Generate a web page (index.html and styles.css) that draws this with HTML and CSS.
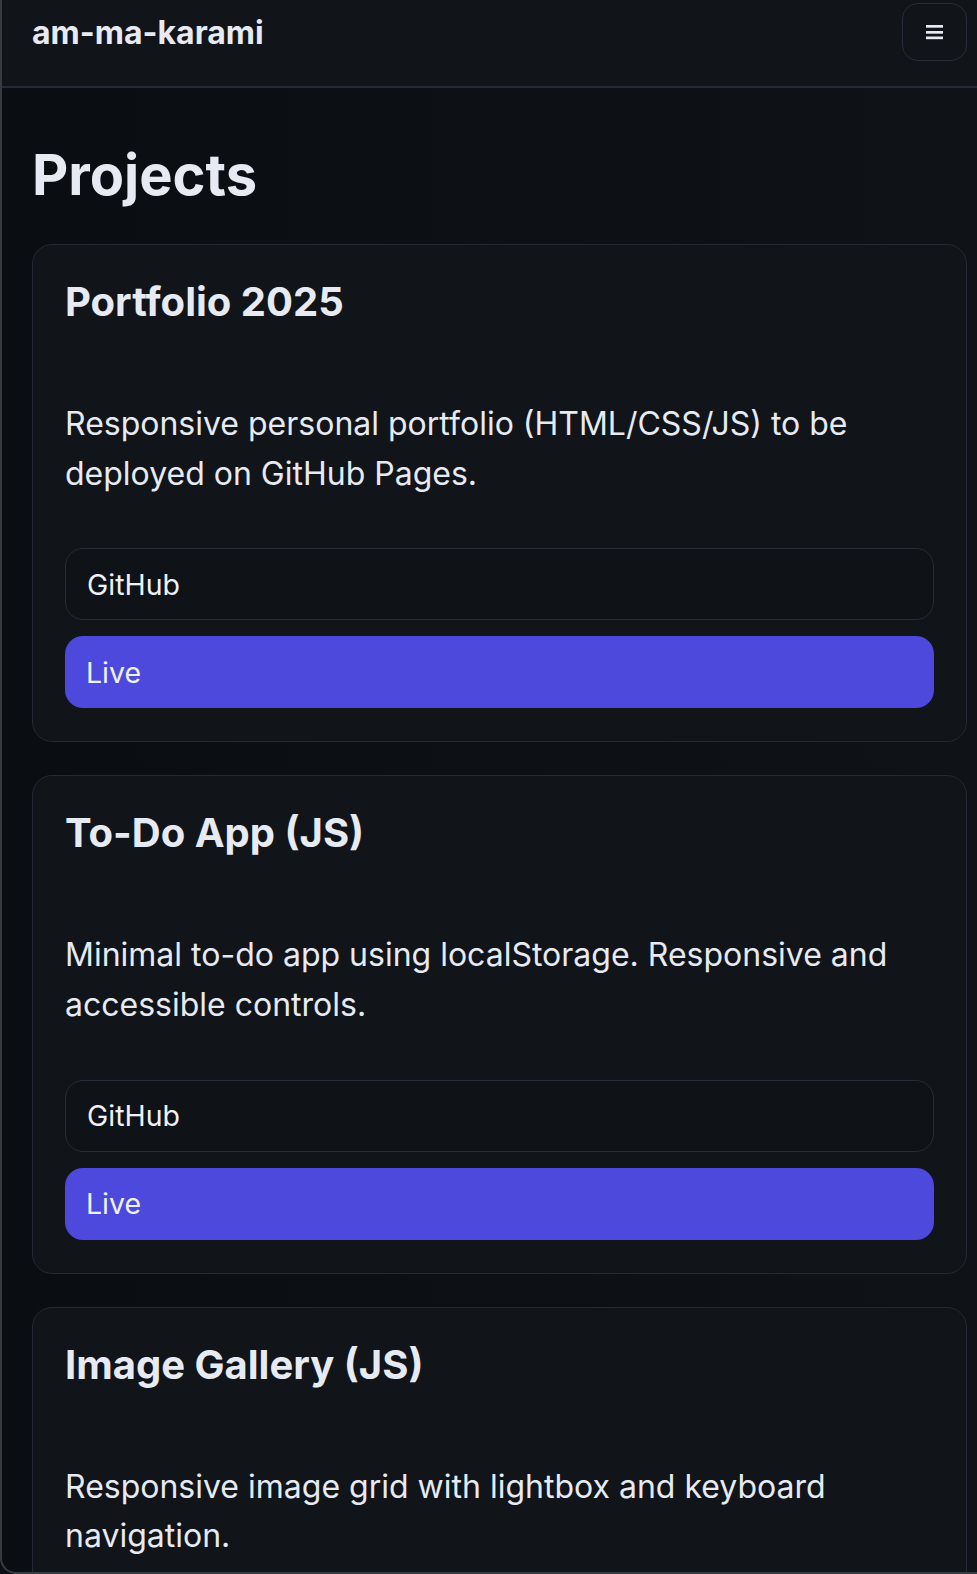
FILE: index.html
```html
<!DOCTYPE html>
<html lang="en">
<head>
<meta charset="utf-8">
<title>am-ma-karami — Projects</title>
<link rel="stylesheet" href="styles.css">
</head>
<body>
<div class="frame">
  <header class="site-header">
    <a class="brand" href="#">am-ma-karami</a>
    <button class="menu-btn" aria-label="Menu">
      <svg width="17" height="15" viewBox="0 0 17 15" aria-hidden="true">
        <rect x="0" y="0" width="17" height="2.7" fill="#e6eaf2"/>
        <rect x="0" y="6" width="17" height="2.7" fill="#e6eaf2"/>
        <rect x="0" y="11.5" width="17" height="2.7" fill="#e6eaf2"/>
      </svg>
    </button>
  </header>
  <main class="content">
    <h1 class="page-title">Projects</h1>
    <div class="cards">
      <article class="card">
        <h2 class="card-title">Portfolio 2025</h2>
        <p class="card-desc">Responsive personal portfolio (HTML/CSS/JS) to be deployed on GitHub Pages.</p>
        <div class="card-actions">
          <a class="btn btn-outline" href="#">GitHub</a>
          <a class="btn btn-primary" href="#">Live</a>
        </div>
      </article>
      <article class="card">
        <h2 class="card-title">To-Do App (JS)</h2>
        <p class="card-desc">Minimal to-do app using localStorage. Responsive and accessible controls.</p>
        <div class="card-actions">
          <a class="btn btn-outline" href="#">GitHub</a>
          <a class="btn btn-primary" href="#">Live</a>
        </div>
      </article>
      <article class="card">
        <h2 class="card-title">Image Gallery (JS)</h2>
        <p class="card-desc">Responsive image grid with lightbox and keyboard navigation.</p>
        <div class="card-actions">
          <a class="btn btn-outline" href="#">GitHub</a>
          <a class="btn btn-primary" href="#">Live</a>
        </div>
      </article>
    </div>
  </main>
</div>
</body>
</html>
```

FILE: styles.css
```css
* { box-sizing: border-box; }

html, body {
  margin: 0;
  padding: 0;
  background: #0b0e12;
  overflow: hidden;
}

body {
  font-family: Inter, "Noto Sans", "Liberation Sans", sans-serif;
  color: #e6eaf2;
}

.frame {
  height: 1574px;
  overflow: hidden;
  border-left: 2px solid #363a42;
  border-bottom: 2px solid #363a42;
  border-bottom-left-radius: 16px;
  background: linear-gradient(90deg, #0a0d11 0%, #0d1015 60%, #0f1217 100%);
}

.site-header {
  display: flex;
  justify-content: space-between;
  align-items: center;
  padding: 3px 10px 25px 30px;
  background: #111419;
  border-bottom: 2px solid #252b36;
}

.brand {
  font-size: 32px;
  font-weight: 700;
  color: #e6eaf2;
  text-decoration: none;
}

.menu-btn {
  width: 65px;
  height: 58px;
  display: flex;
  align-items: center;
  justify-content: center;
  background: #111419;
  border: 1.5px solid #262d39;
  border-radius: 16px;
  padding: 0;
}

.content {
  padding: 0 10px 0 30px;
}

.page-title {
  margin: 54px 0 35px;
  font-size: 56px;
  line-height: 1.2;
  font-weight: 700;
}

.cards {
  display: flex;
  flex-direction: column;
  gap: 33px;
}

.card {
  background: #111419;
  border: 1px solid #232a36;
  border-radius: 20px;
  padding: 33px 32px 33px;
}

.card-title {
  margin: 0;
  font-size: 40px;
  line-height: 1.2;
  font-weight: 700;
}

.card-desc {
  margin: 73px 0 50px;
  font-size: 32px;
  line-height: 1.55;
}

.card-actions {
  display: flex;
  flex-direction: column;
  gap: 16px;
}

.btn {
  display: flex;
  align-items: center;
  height: 72px;
  padding: 0 21px;
  border-radius: 18px;
  font-size: 28.5px;
  color: #eef1f7;
  text-decoration: none;
}

.btn-outline {
  border: 1.5px solid #262d39;
  background: #0f1217;
}

.btn-primary {
  background: #4c49dc;
}
```
